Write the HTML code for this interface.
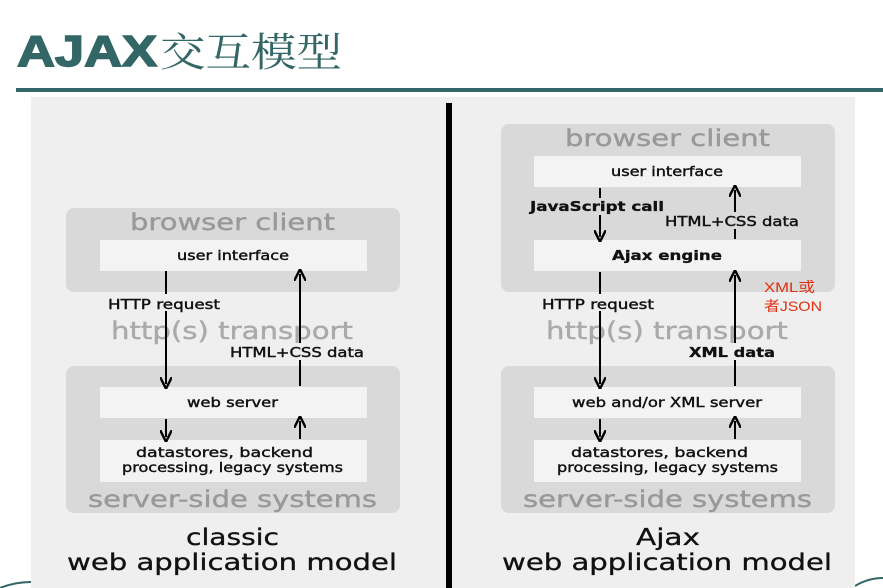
<!DOCTYPE html>
<html><head><meta charset="utf-8"><style>
html,body{margin:0;padding:0;background:#fff;width:883px;height:588px;overflow:hidden}
svg{display:block}
text{stroke:currentColor}
text.cjk{stroke:none}
</style></head><body>
<svg width="883" height="588" viewBox="0 0 883 588" xmlns="http://www.w3.org/2000/svg" font-family="DejaVu Sans, Verdana, sans-serif">
<defs>
<marker id="ah" viewBox="0 0 10 10" refX="6" refY="5" markerWidth="6" markerHeight="6" orient="auto"><path d="M0,0 L10,5 L0,10" fill="none" stroke="#000" stroke-width="2"/></marker>
</defs>
<text x="17" y="66" font-family="Liberation Sans, sans-serif" font-weight="bold" font-size="44" fill="#336666" color="#336666" stroke-width="1.5" textLength="140" lengthAdjust="spacingAndGlyphs">AJAX</text>
<text class="cjk" x="160" y="66" font-family="Noto Serif CJK SC, serif" font-size="40" fill="#336666" textLength="182" lengthAdjust="spacingAndGlyphs">交互模型</text>
<rect x="16" y="88" width="867" height="4" fill="#336666"/>
<path d="M0,588 Q15,582 31,582" stroke="#336666" stroke-width="2" fill="none"/>
<path d="M855,586 Q868,578 883,578" stroke="#336666" stroke-width="2" fill="none"/>
<rect x="31" y="97" width="824" height="491" fill="#efefef"/>
<rect x="446" y="103" width="6" height="485" fill="#000"/>

<g stroke-width="0">
<!-- LEFT -->
<rect x="66" y="208" width="334" height="84" rx="8" fill="#d9d9d9"/>
<text x="130" y="230" font-size="23" fill="#999" color="#999" stroke-width="0.4" textLength="205" lengthAdjust="spacingAndGlyphs">browser client</text>
<rect x="100" y="240" width="267" height="31" fill="#f3f3f3"/>
<text x="177" y="260" font-size="13" fill="#111" color="#111" stroke-width="0.4" textLength="112" lengthAdjust="spacingAndGlyphs">user interface</text>
<rect x="66" y="366" width="334" height="147" rx="8" fill="#d9d9d9"/>
<rect x="100" y="387" width="267" height="31" fill="#f3f3f3"/>
<text x="187" y="407" font-size="13" fill="#111" color="#111" stroke-width="0.4" textLength="91" lengthAdjust="spacingAndGlyphs">web server</text>
<rect x="100" y="440" width="267" height="42" fill="#f3f3f3"/>
<text x="136" y="457" font-size="13" fill="#111" color="#111" stroke-width="0.4" textLength="177" lengthAdjust="spacingAndGlyphs">datastores, backend</text>
<text x="122" y="472" font-size="13" fill="#111" color="#111" stroke-width="0.4" textLength="221" lengthAdjust="spacingAndGlyphs">processing, legacy systems</text>
<text x="88" y="507" font-size="23" fill="#999" color="#999" stroke-width="0.4" textLength="289" lengthAdjust="spacingAndGlyphs">server-side systems</text>
<text x="111" y="339" font-size="24" fill="#aaa" color="#aaa" stroke-width="0.4" textLength="242" lengthAdjust="spacingAndGlyphs">http(s) transport</text>
<line x1="166" y1="271" x2="166" y2="384" stroke="#000" stroke-width="2" marker-end="url(#ah)"/>
<rect x="105" y="294" width="120" height="17" fill="#efefef"/>
<text x="108" y="309" font-size="13" fill="#111" color="#111" stroke-width="0.4" textLength="112" lengthAdjust="spacingAndGlyphs">HTTP request</text>
<line x1="300" y1="386" x2="300" y2="274" stroke="#000" stroke-width="2" marker-end="url(#ah)"/>
<rect x="228" y="343" width="140" height="17" fill="#efefef"/>
<text x="230" y="357" font-size="13" fill="#111" color="#111" stroke-width="0.4" textLength="134" lengthAdjust="spacingAndGlyphs">HTML+CSS data</text>
<line x1="166" y1="419" x2="166" y2="437" stroke="#000" stroke-width="2" marker-end="url(#ah)"/>
<line x1="300" y1="439" x2="300" y2="421" stroke="#000" stroke-width="2" marker-end="url(#ah)"/>
<text x="186" y="545" font-size="23" fill="#111" color="#111" stroke-width="0.3" textLength="93" lengthAdjust="spacingAndGlyphs">classic</text>
<text x="67" y="570" font-size="23" fill="#111" color="#111" stroke-width="0.3" textLength="330" lengthAdjust="spacingAndGlyphs">web application model</text>

<!-- RIGHT -->
<rect x="501" y="124" width="334" height="168" rx="8" fill="#d9d9d9"/>
<text x="565" y="146" font-size="23" fill="#999" color="#999" stroke-width="0.4" textLength="205" lengthAdjust="spacingAndGlyphs">browser client</text>
<rect x="534" y="156" width="267" height="31" fill="#f3f3f3"/>
<text x="611" y="176" font-size="13" fill="#111" color="#111" stroke-width="0.4" textLength="112" lengthAdjust="spacingAndGlyphs">user interface</text>
<rect x="534" y="240" width="267" height="31" fill="#f3f3f3"/>
<text x="612" y="260" font-size="13" font-weight="bold" fill="#111" color="#111" stroke-width="0.3" textLength="110" lengthAdjust="spacingAndGlyphs">Ajax engine</text>
<line x1="600" y1="188" x2="600" y2="237" stroke="#000" stroke-width="2" marker-end="url(#ah)"/>
<rect x="528" y="198" width="140" height="17" fill="#d9d9d9"/>
<text x="530" y="211" font-size="13" font-weight="bold" fill="#111" color="#111" stroke-width="0.3" textLength="134" lengthAdjust="spacingAndGlyphs">JavaScript call</text>
<line x1="735" y1="239" x2="735" y2="190" stroke="#000" stroke-width="2" marker-end="url(#ah)"/>
<rect x="662" y="212" width="140" height="17" fill="#d9d9d9"/>
<text x="665" y="226" font-size="13" fill="#111" color="#111" stroke-width="0.4" textLength="134" lengthAdjust="spacingAndGlyphs">HTML+CSS data</text>
<rect x="501" y="366" width="334" height="147" rx="8" fill="#d9d9d9"/>
<rect x="534" y="387" width="267" height="31" fill="#f3f3f3"/>
<text x="572" y="407" font-size="13" fill="#111" color="#111" stroke-width="0.4" textLength="190" lengthAdjust="spacingAndGlyphs">web and/or XML server</text>
<rect x="534" y="440" width="267" height="42" fill="#f3f3f3"/>
<text x="571" y="457" font-size="13" fill="#111" color="#111" stroke-width="0.4" textLength="177" lengthAdjust="spacingAndGlyphs">datastores, backend</text>
<text x="557" y="472" font-size="13" fill="#111" color="#111" stroke-width="0.4" textLength="221" lengthAdjust="spacingAndGlyphs">processing, legacy systems</text>
<text x="523" y="507" font-size="23" fill="#999" color="#999" stroke-width="0.4" textLength="289" lengthAdjust="spacingAndGlyphs">server-side systems</text>
<text x="546" y="339" font-size="24" fill="#aaa" color="#aaa" stroke-width="0.4" textLength="242" lengthAdjust="spacingAndGlyphs">http(s) transport</text>
<line x1="600" y1="272" x2="600" y2="384" stroke="#000" stroke-width="2" marker-end="url(#ah)"/>
<rect x="540" y="294" width="120" height="17" fill="#efefef"/>
<text x="542" y="309" font-size="13" fill="#111" color="#111" stroke-width="0.4" textLength="112" lengthAdjust="spacingAndGlyphs">HTTP request</text>
<line x1="735" y1="386" x2="735" y2="275" stroke="#000" stroke-width="2" marker-end="url(#ah)"/>
<rect x="686" y="343" width="95" height="17" fill="#efefef"/>
<text x="689" y="357" font-size="13" font-weight="bold" fill="#111" color="#111" stroke-width="0.3" textLength="86" lengthAdjust="spacingAndGlyphs">XML data</text>
<line x1="600" y1="419" x2="600" y2="437" stroke="#000" stroke-width="2" marker-end="url(#ah)"/>
<line x1="735" y1="439" x2="735" y2="421" stroke="#000" stroke-width="2" marker-end="url(#ah)"/>
<text class="cjk" x="764" y="292" font-family="Liberation Sans, Noto Sans CJK SC, sans-serif" font-size="14" fill="#e03010" textLength="51" lengthAdjust="spacingAndGlyphs">XML或</text>
<text class="cjk" x="764" y="311" font-family="Liberation Sans, Noto Sans CJK SC, sans-serif" font-size="14" fill="#e03010" textLength="58" lengthAdjust="spacingAndGlyphs">者JSON</text>
<text x="636" y="545" font-size="23" fill="#111" color="#111" stroke-width="0.3" textLength="64" lengthAdjust="spacingAndGlyphs">Ajax</text>
<text x="502" y="570" font-size="23" fill="#111" color="#111" stroke-width="0.3" textLength="330" lengthAdjust="spacingAndGlyphs">web application model</text>
</g>
</svg>
</body></html>
